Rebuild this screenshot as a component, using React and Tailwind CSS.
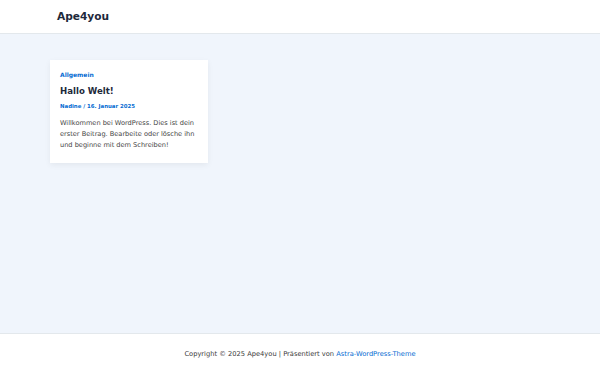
import React from "react";

const App = () => {
  return (
    <div
      className="flex flex-col h-[375px] bg-[#f0f5fc] text-[#3a3a3a]"
      style={{ fontFamily: '"DejaVu Sans", Verdana, sans-serif' }}
    >
      {/* Header */}
      <header className="h-[34px] bg-white border-b border-[#e3e8ec] flex items-center px-[57px]">
        <span className="text-[10.6px] font-bold text-[#1e293b] leading-none">Ape4you</span>
      </header>

      {/* Main */}
      <main className="flex-1 px-[50px] pt-[26px]">
        <article className="w-[158px] bg-white shadow-[0_2px_6px_rgba(0,0,0,0.06)] px-[10px] pt-[12px] pb-[11px]">
          <div className="text-[6px] font-bold text-[#046bd2] leading-none">Allgemein</div>
          <h2 className="mt-[9px] text-[8.6px] font-bold text-[#1e293b] leading-none">Hallo Welt!</h2>
          <div className="mt-[8px] text-[5.4px] font-bold text-[#046bd2] leading-none">
            Nadine / 16. Januar 2025
          </div>
          <p className="mt-[9px] text-[6.6px] leading-[11.2px] text-[#454545]">
            Willkommen bei WordPress. Dies ist dein erster Beitrag. Bearbeite oder lösche ihn
            und beginne mit dem Schreiben!
          </p>
        </article>
      </main>

      {/* Footer */}
      <footer className="h-[42px] bg-white border-t border-[#e3e8ec] flex items-center justify-center">
        <p className="text-[6.7px] text-[#3a3a3a] leading-none">
          Copyright © 2025 Ape4you | Präsentiert von{" "}
          <a href="#" className="text-[#046bd2]">Astra-WordPress-Theme</a>
        </p>
      </footer>
    </div>
  );
};

export default App;
